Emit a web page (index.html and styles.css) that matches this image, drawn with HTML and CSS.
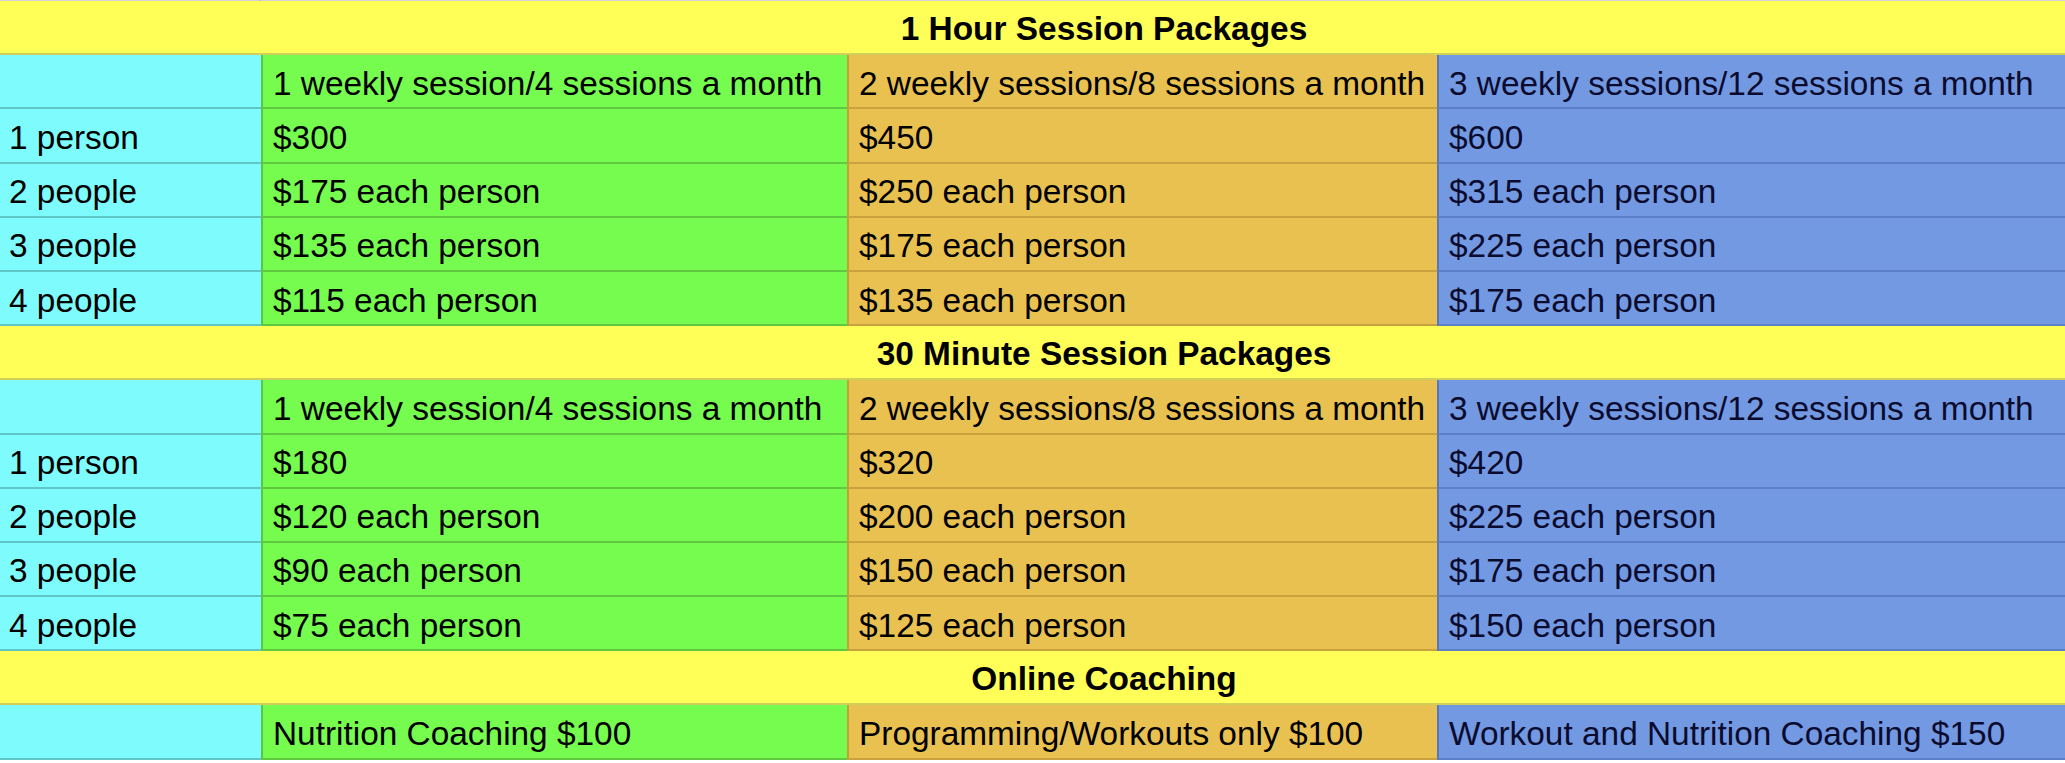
FILE: index.html
```html
<!DOCTYPE html>
<html lang="en">
<head>
<meta charset="utf-8">
<title>Session Packages</title>
<link rel="stylesheet" href="styles.css">
</head>
<body>
<div class="sheet">
  <div class="cell top c1"></div><div class="cell top"></div><div class="cell top"></div><div class="cell top"></div>

  <div class="cell head">1 Hour Session Packages</div>
  <div class="cell cy"></div>
  <div class="cell gr">1 weekly session/4 sessions a month</div>
  <div class="cell or">2 weekly sessions/8 sessions a month</div>
  <div class="cell bl">3 weekly sessions/12 sessions a month</div>
  <div class="cell cy">1 person</div>
  <div class="cell gr">$300</div>
  <div class="cell or">$450</div>
  <div class="cell bl">$600</div>
  <div class="cell cy">2 people</div>
  <div class="cell gr">$175 each person</div>
  <div class="cell or">$250 each person</div>
  <div class="cell bl">$315 each person</div>
  <div class="cell cy">3 people</div>
  <div class="cell gr">$135 each person</div>
  <div class="cell or">$175 each person</div>
  <div class="cell bl">$225 each person</div>
  <div class="cell cy">4 people</div>
  <div class="cell gr">$115 each person</div>
  <div class="cell or">$135 each person</div>
  <div class="cell bl">$175 each person</div>

  <div class="cell head">30 Minute Session Packages</div>
  <div class="cell cy"></div>
  <div class="cell gr">1 weekly session/4 sessions a month</div>
  <div class="cell or">2 weekly sessions/8 sessions a month</div>
  <div class="cell bl">3 weekly sessions/12 sessions a month</div>
  <div class="cell cy">1 person</div>
  <div class="cell gr">$180</div>
  <div class="cell or">$320</div>
  <div class="cell bl">$420</div>
  <div class="cell cy">2 people</div>
  <div class="cell gr">$120 each person</div>
  <div class="cell or">$200 each person</div>
  <div class="cell bl">$225 each person</div>
  <div class="cell cy">3 people</div>
  <div class="cell gr">$90 each person</div>
  <div class="cell or">$150 each person</div>
  <div class="cell bl">$175 each person</div>
  <div class="cell cy">4 people</div>
  <div class="cell gr">$75 each person</div>
  <div class="cell or">$125 each person</div>
  <div class="cell bl">$150 each person</div>

  <div class="cell head">Online Coaching</div>
  <div class="cell cy"></div>
  <div class="cell gr">Nutrition Coaching $100</div>
  <div class="cell or">Programming/Workouts only $100</div>
  <div class="cell bl">Workout and Nutrition Coaching $150</div>
</div>
</body>
</html>
```

FILE: styles.css
```css
html, body {
  margin: 0;
  padding: 0;
  background: #ffffff;
  overflow: hidden;
}

.sheet {
  display: grid;
  grid-template-columns: 261px 586px 590px 771px;
  grid-template-rows: 1px repeat(14, 54.2px);
  width: 2208px;
  font-family: "Liberation Sans", Arial, sans-serif;
  font-size: 33.4px;
  color: #000;
}

.cell {
  box-sizing: border-box;
  display: flex;
  align-items: center;
  padding: 5px 0 0 10px;
  white-space: nowrap;
  overflow: hidden;
}

.top {
  padding: 0;
  background: #d4d4d4;
}
.top.c1 {
  border-right: 2px solid #bdbdbd;
}

.head {
  grid-column: 1 / -1;
  justify-content: center;
  padding-left: 0;
  padding-top: 3px;
  font-weight: bold;
  background: #ffff57;
  border-bottom: 2px solid #cfcf5a;
}

.cy {
  background: #7efcfd;
  border-bottom: 2px solid #5ec6c7;
  padding-left: 9px;
}

.gr {
  background: #76fb4f;
  border-left: 2px solid #5cc63c;
  border-bottom: 2px solid #5ec83e;
}

.or {
  background: #e8c150;
  border-left: 2px solid #c49e38;
  border-bottom: 2px solid #c9a13d;
}

.bl {
  background: #7399e3;
  border-left: 2px solid #5479c4;
  border-bottom: 2px solid #5b80c8;
  color: #0b0b2e;
}
```
